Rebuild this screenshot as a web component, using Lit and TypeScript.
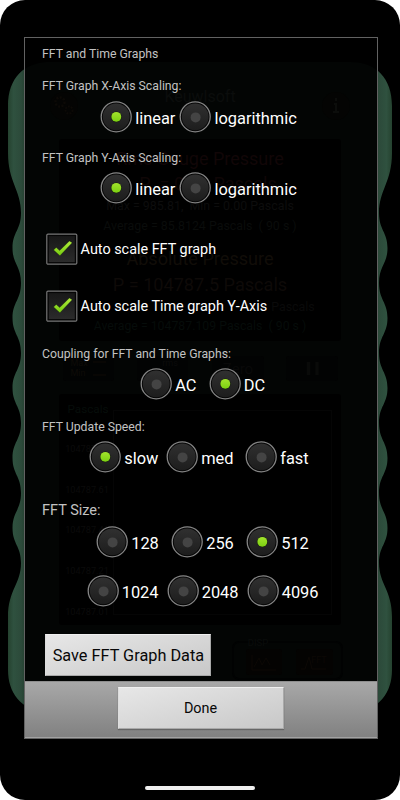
import { LitElement, html, svg, css } from "lit";
import { customElement, property } from "lit/decorators.js";
import { classMap } from "lit/directives/class-map.js";

@customElement("radio-dot")
class RadioDot extends LitElement {
  @property() label = "";
  @property({ type: Boolean }) on = false;
  static styles = css`
    :host { display: flex; align-items: center; height: 32px; white-space: nowrap; }
    svg { flex: none; display: block; width: 32px; height: 32px; margin-right: 3.2px; }
    .text { font-size: 16.4px; line-height: 20px; color: #fff; padding-top: 4px; }
  `;
  render() {
    return html`<svg viewBox="0 0 32 32">
        <defs>
          <linearGradient id="f" x2="0" y2="1"><stop stop-color="#303030" /><stop offset="1" stop-color="#1d1d1d" /></linearGradient>
          <linearGradient id="g" x2="0" y2="1"><stop stop-color="#a3e42d" /><stop offset="1" stop-color="#7cd012" /></linearGradient>
        </defs>
        <circle cx="16.2" cy="15.8" r="15" fill="#060606" stroke="#858585" stroke-width="1.3" />
        <circle cx="16.2" cy="15.8" r="13.4" fill="url(#f)" />
        ${this.on
          ? svg`<circle cx="16.3" cy="15.8" r="5.4" fill="#16200b" /><circle cx="16.3" cy="15.8" r="4.9" fill="url(#g)" />`
          : svg`<circle cx="16.6" cy="16.4" r="5" fill="#444" />`}
      </svg><span class="text">${this.label}</span>`;
  }
}

@customElement("check-line")
class CheckLine extends LitElement {
  @property() label = "";
  static styles = css`
    :host { display: flex; align-items: center; height: 32px; white-space: nowrap; }
    svg { flex: none; width: 32px; height: 32px; margin-right: 2.6px; }
    .text { font-size: 14.4px; line-height: 20px; color: #fff; padding-top: 2px; }
  `;
  render() {
    return html`<svg viewBox="0 0 32 32">
        <defs>
          <linearGradient id="b" x2="0" y2="1"><stop stop-color="#181818" /><stop offset="1" stop-color="#2b2b2b" /></linearGradient>
          <linearGradient id="c" x2="0" y2="1"><stop stop-color="#b0ec3b" /><stop offset="1" stop-color="#75cb10" /></linearGradient>
        </defs>
        <rect x=".8" y="1.1" width="30" height="30" rx="1.2" fill="#050505" stroke="#777" stroke-width="1.2" />
        <rect x="2.8" y="3.1" width="26" height="26" fill="url(#b)" />
        <path d="M7.6 16.9 L10.2 14.5 L13.7 17.6 L23.4 7.9 L26.2 9.7 L13.9 22.8 Z" fill="url(#c)" stroke="#15200a" stroke-width=".3" />
      </svg><span class="text">${this.label}</span>`;
  }
}

/* One half of the scalloped device case, mirrored for the other side. */
function caseHalf(): string {
  let d = "M200 62 H50 C24 62 8 78 8 106 V153 C8 182 21 190 21 213";
  for (let y = 213; y < 493; y += 70) {
    d += ` C21 ${y + 17} 12.5 ${y + 19} 12.5 ${y + 35} C12.5 ${y + 51} 21 ${y + 53} 21 ${y + 70}`;
  }
  d += " C21 510 12.5 512 12.5 528 C12.5 544 21 546 21 563 C21 584 8 590 8 617 V670 C8 692 20 710 48 714 H200 Z";
  return d;
}

type Ghost = [string, number, number, number, string];
const ghosts: Ghost[] = [
  ["Keuwlsoft", 200, 102, 16, "#0b0d0c"],
  ["Rms Gauge Pressure", 200, 165, 18, "#110607"],
  ["P  = 0.00 Pascals", 208, 190, 18, "#0f0606"],
  ["Max = 985.81,  Min = 0.00 Pascals", 200, 210, 12.4, "#0d0d0d"],
  ["Average = 85.8124 Pascals  ( 90 s )", 200, 230, 12.4, "#0a0c0b"],
  ["Absolute Pressure", 200, 265, 18.1, "#110d08"],
  ["P = 104787.5 Pascals", 200, 291, 18.1, "#0e0a08"],
  ["Pascals", 293, 311, 12.4, "#0a0a0a"],
  ["Average = 104787.109 Pascals  ( 90 s )", 200, 330, 12.3, "#060c0a"],
  ["Zero", 238, 374, 15, "#090909"],
  ["Max", 79, 366, 9, "#0e0b07"],
  ["Min", 78, 376, 9, "#0e0b07"],
  ["rms", 170, 366, 9, "#0b0b0b"],
  ["Pascals", 88, 413, 11.7, "#060d0a"],
  ["104787.81", 87, 452, 9.2, "#0b0b0b"],
  ["104787.61", 87, 493, 9.2, "#0b0b0b"],
  ["104787.41", 87, 533, 9.2, "#0b0b0b"],
  ["104787.21", 87, 574, 9.2, "#0b0b0b"],
  ["104787.01", 87, 615, 9.2, "#0b0b0b"],
  ["DISP", 258, 646, 9.5, "#0a0c0b"],
];

const row = (cls: string, items: string[], on: number) => html`
  <div class="radios ${cls}">
    ${items.map((t, i) => html`<radio-dot .label=${t} .on=${i === on}></radio-dot>`)}
  </div>`;
const label = (text: string, cls: Record<string, boolean> = {}) =>
  html`<div class=${classMap({ label: true, ...cls })}>${text}</div>`;

@customElement("app-root")
class AppRoot extends LitElement {
  static styles = css`
    :host { display: block; width: 400px; height: 800px; background: #fff; font-family: Roboto, sans-serif; }
    .phone { position: relative; box-sizing: border-box; width: 400px; height: 800px; padding: 37px 22px 0 24px; background: #000; border-radius: 25px; overflow: hidden; }
    .backdrop { position: absolute; left: 0; top: 0; width: 400px; height: 800px; }
    .backdrop text { text-anchor: middle; white-space: pre; }
    .dialog { position: relative; box-sizing: border-box; height: 702px; border: 1.3px solid #626262; display: flex; flex-direction: column; }
    .body { height: 643px; padding-left: 17px; box-sizing: border-box; }
    .label { display: flex; align-items: center; height: 29px; font-size: 12.25px; color: #c2c2c2; white-space: nowrap; }
    .title { height: 31px; }
    .x { margin-top: 2px; height: 30px; }
    .y { margin-top: 10px; }
    .coupling { margin-top: 17px; }
    .speed { margin-top: 12px; }
    .size { margin-top: 22px; height: 30px; font-size: 14.5px; }
    .radios { display: grid; height: 32px; }
    .scale { padding-left: 58px; grid-template-columns: 79.3px auto; justify-content: start; }
    .acdc { padding-left: 98px; grid-template-columns: 68.5px auto; }
    .rate { padding-left: 47px; grid-template-columns: 77px 79px auto; }
    .small { padding-left: 54px; margin-top: 1px; grid-template-columns: 75px 75px auto; }
    .large { padding-left: 44.5px; margin-top: 17px; grid-template-columns: 80px 80px auto; }
    check-line { margin-left: 4px; margin-top: 25px; }
    check-line.first { margin-top: 29px; }
    .button { display: flex; align-items: center; justify-content: center; box-sizing: border-box; width: 167px; height: 42px; color: #080808; background: linear-gradient(165deg, #e7e7e7, #c8c8c8); border: 1px solid #a9a9a9; border-top-color: #f0f0f0; border-left-color: #ddd; }
    .save { margin: 27px 0 0 3.4px; width: 166px; font-size: 16.3px; }
    .footer { height: 57px; flex: none; box-sizing: border-box; padding-top: 5px; display: flex; justify-content: center; background: linear-gradient(#a8a8a8, #818181); border-top: 1px solid #8e8e8e; border-bottom: 1px solid #a2a2a2; }
    .done { font-size: 14.4px; width: 166px; margin-right: 1px; box-shadow: 0 1px 1px #666; }
    .home { position: relative; width: 110px; height: 4px; margin: 47px 0 0 121px; border-radius: 2px; background: #f0f0f0; }
  `;
  render() {
    const d = caseHalf();
    return html`
      <div class="phone">
        <svg class="backdrop" viewBox="0 0 400 800">
          <defs>
            <linearGradient id="case" gradientUnits="userSpaceOnUse" x1="8" y1="0" x2="30" y2="0">
              <stop stop-color="#25422f" /><stop offset=".25" stop-color="#2f513f" /><stop offset=".6" stop-color="#2c4a3a" /><stop offset="1" stop-color="#1d3427" />
            </linearGradient>
            <clipPath id="inside"><rect x="24" y="37" width="354" height="702" /></clipPath>
          </defs>
          <path d=${d} fill="url(#case)" />
          <path d=${d} fill="url(#case)" transform="translate(400 0) scale(-1 1)" />
          <rect x="24" y="37" width="354" height="702" fill="#000" />
          <g clip-path="url(#inside)">
            <path d=${d} fill="#030504" />
            <path d=${d} fill="#030504" transform="translate(400 0) scale(-1 1)" />
            <rect x="59" y="139" width="282" height="202" rx="3" fill="#000" />
            <rect x="59" y="394" width="282" height="231" rx="3" fill="#000" />
            <rect x="113.5" y="410.5" width="218" height="204" fill="none" stroke="#050505" />
            <rect x="63" y="356" width="51" height="25" rx="3" fill="#020303" />
            <rect x="137" y="356" width="51" height="25" rx="3" fill="#020303" />
            <rect x="212" y="356" width="52" height="25" rx="3" fill="#020303" />
            <rect x="286" y="356" width="52" height="25" rx="3" fill="#020303" />
            <path d="M308.5 362v13M317 362v13" stroke="#090a09" stroke-width="3.5" />
            <path d="M93 362h13M93 375h13" stroke="#0e0b07" />
            <circle cx="64" cy="106" r="14" fill="#040403" />
            <circle cx="60" cy="102" r="4.5" fill="none" stroke="#0c0906" stroke-width="2.6" stroke-dasharray="2 1.4" />
            <circle cx="69" cy="110" r="3.5" fill="none" stroke="#0c0906" stroke-width="2" stroke-dasharray="1.8 1.2" />
            <circle cx="336" cy="106" r="14" fill="#040403" />
            <path d="M336 98v3M334 104h2v8M333 112h6" fill="none" stroke="#0c0d0b" stroke-width="2.2" />
            <rect x="233" y="642" width="109" height="37" rx="6" fill="none" stroke="#010202" stroke-width="2" />
            <rect x="246" y="649" width="36" height="26" rx="3" fill="#040302" />
            <rect x="296" y="649" width="37" height="26" rx="3" fill="#040302" />
            <path d="M252 655v15h24M254 667l5-9 3 7 4-7 4 7" fill="none" stroke="#0c0805" />
            <path d="M301 669h4l4-12 3 12h14" fill="none" stroke="#0c0805" />
            <text x="319" y="663" font-size="9" fill="#0c0805">FFT</text>
            ${ghosts.map(([t, x, y, s, c]) => svg`<text x=${x} y=${y} font-size=${s} fill=${c}>${t}</text>`)}
          </g>
        </svg>
        <div class="dialog">
          <div class="body">
            ${label("FFT and Time Graphs", { title: true })}
            ${label("FFT Graph X-Axis Scaling:", { x: true })}
            ${row("scale", ["linear", "logarithmic"], 0)}
            ${label("FFT Graph Y-Axis Scaling:", { y: true })}
            ${row("scale", ["linear", "logarithmic"], 0)}
            <check-line class="first" label="Auto scale FFT graph"></check-line>
            <check-line label="Auto scale Time graph Y-Axis"></check-line>
            ${label("Coupling for FFT and Time Graphs:", { coupling: true })}
            ${row("acdc", ["AC", "DC"], 1)}
            ${label("FFT Update Speed:", { speed: true })}
            ${row("rate", ["slow", "med", "fast"], 0)}
            ${label("FFT Size:", { size: true })}
            ${row("small", ["128", "256", "512"], 2)}
            ${row("large", ["1024", "2048", "4096"], -1)}
            <div class="button save">Save FFT Graph Data</div>
          </div>
          <div class="footer"><div class="button done">Done</div></div>
        </div>
        <div class="home"></div>
      </div>`;
  }
}
